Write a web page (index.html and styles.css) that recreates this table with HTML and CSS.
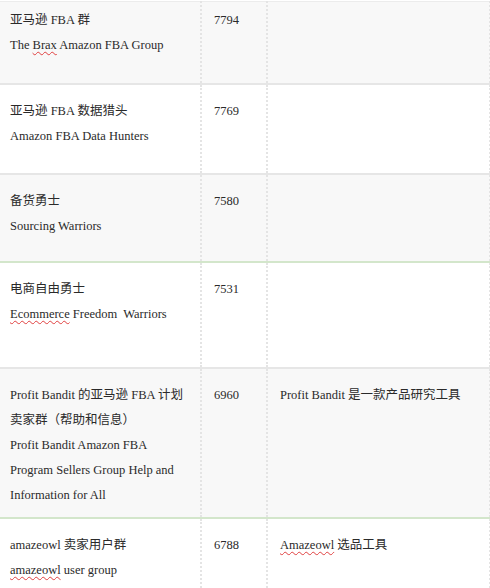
FILE: index.html
```html
<!DOCTYPE html>
<html lang="zh">
<head>
<meta charset="utf-8">
<title>FBA Groups</title>
<link rel="stylesheet" href="styles.css">
</head>
<body>
<table class="groups">
  <colgroup>
    <col class="c-name">
    <col class="c-num">
    <col class="c-desc">
  </colgroup>
  <tbody>
    <tr class="row alt r1">
      <td>亚马逊 FBA 群<br>The <span class="sp">Brax</span> Amazon FBA Group</td>
      <td class="num">7794</td>
      <td></td>
    </tr>
    <tr class="row r2">
      <td>亚马逊 FBA 数据猎头<br>Amazon FBA Data Hunters</td>
      <td class="num">7769</td>
      <td></td>
    </tr>
    <tr class="row alt r3 green">
      <td>备货勇士<br>Sourcing Warriors</td>
      <td class="num">7580</td>
      <td></td>
    </tr>
    <tr class="row r4">
      <td>电商自由勇士<br><span class="sp">Ecommerce</span> Freedom&nbsp; Warriors</td>
      <td class="num">7531</td>
      <td></td>
    </tr>
    <tr class="row alt r5 green">
      <td>Profit Bandit 的亚马逊 FBA 计划<br>卖家群（帮助和信息）<br>Profit Bandit Amazon FBA<br>Program Sellers Group Help and<br>Information for All</td>
      <td class="num">6960</td>
      <td class="desc">Profit Bandit 是一款产品研究工具</td>
    </tr>
    <tr class="row r6">
      <td>amazeowl 卖家用户群<br><span class="sp">amazeowl</span> user group</td>
      <td class="num">6788</td>
      <td class="desc"><span class="sp">Amazeowl</span> 选品工具</td>
    </tr>
  </tbody>
</table>
</body>
</html>
```

FILE: styles.css
```css
html, body {
  margin: 0;
  padding: 0;
  background: #ffffff;
}

body {
  width: 490px;
  height: 588px;
  overflow: hidden;
}

.groups {
  width: 490px;
  margin-top: 1px;
  border-collapse: collapse;
  table-layout: fixed;
  font-family: "Liberation Serif", "Noto Sans CJK SC", serif;
  font-size: 12.5px;
  line-height: 25px;
  color: #2a2a2a;
  border-top: 1px solid #ececec;
}

.c-name { width: 201px; }
.c-num { width: 66px; }
.c-desc { width: 223px; }

.groups td {
  vertical-align: top;
  padding: 14px 10px 0 10px;
  border-bottom: 2px solid #e6e6e6;
  border-left: 2px dotted #e4e4e4;
}

.groups td:first-child {
  border-left: none;
}

.groups td:last-child {
  border-right: 2px dotted #e4e4e4;
}

.row.alt td {
  background: #f8f8f8;
}

.row.green td {
  border-bottom-color: #d3e6cb;
}

.r1 { height: 82px; }
.r1 td { padding-top: 6px; }
.r2 { height: 90px; }
.r3 { height: 88px; }
.r4 { height: 106px; }
.r5 { height: 150px; }
.r6 { height: 90px; }

.num {
  padding-left: 12px !important;
}

.desc {
  padding-left: 12px !important;
}

.sp {
  text-decoration: underline wavy #e04040;
  text-decoration-thickness: 1px;
  text-underline-offset: 2px;
}
```
